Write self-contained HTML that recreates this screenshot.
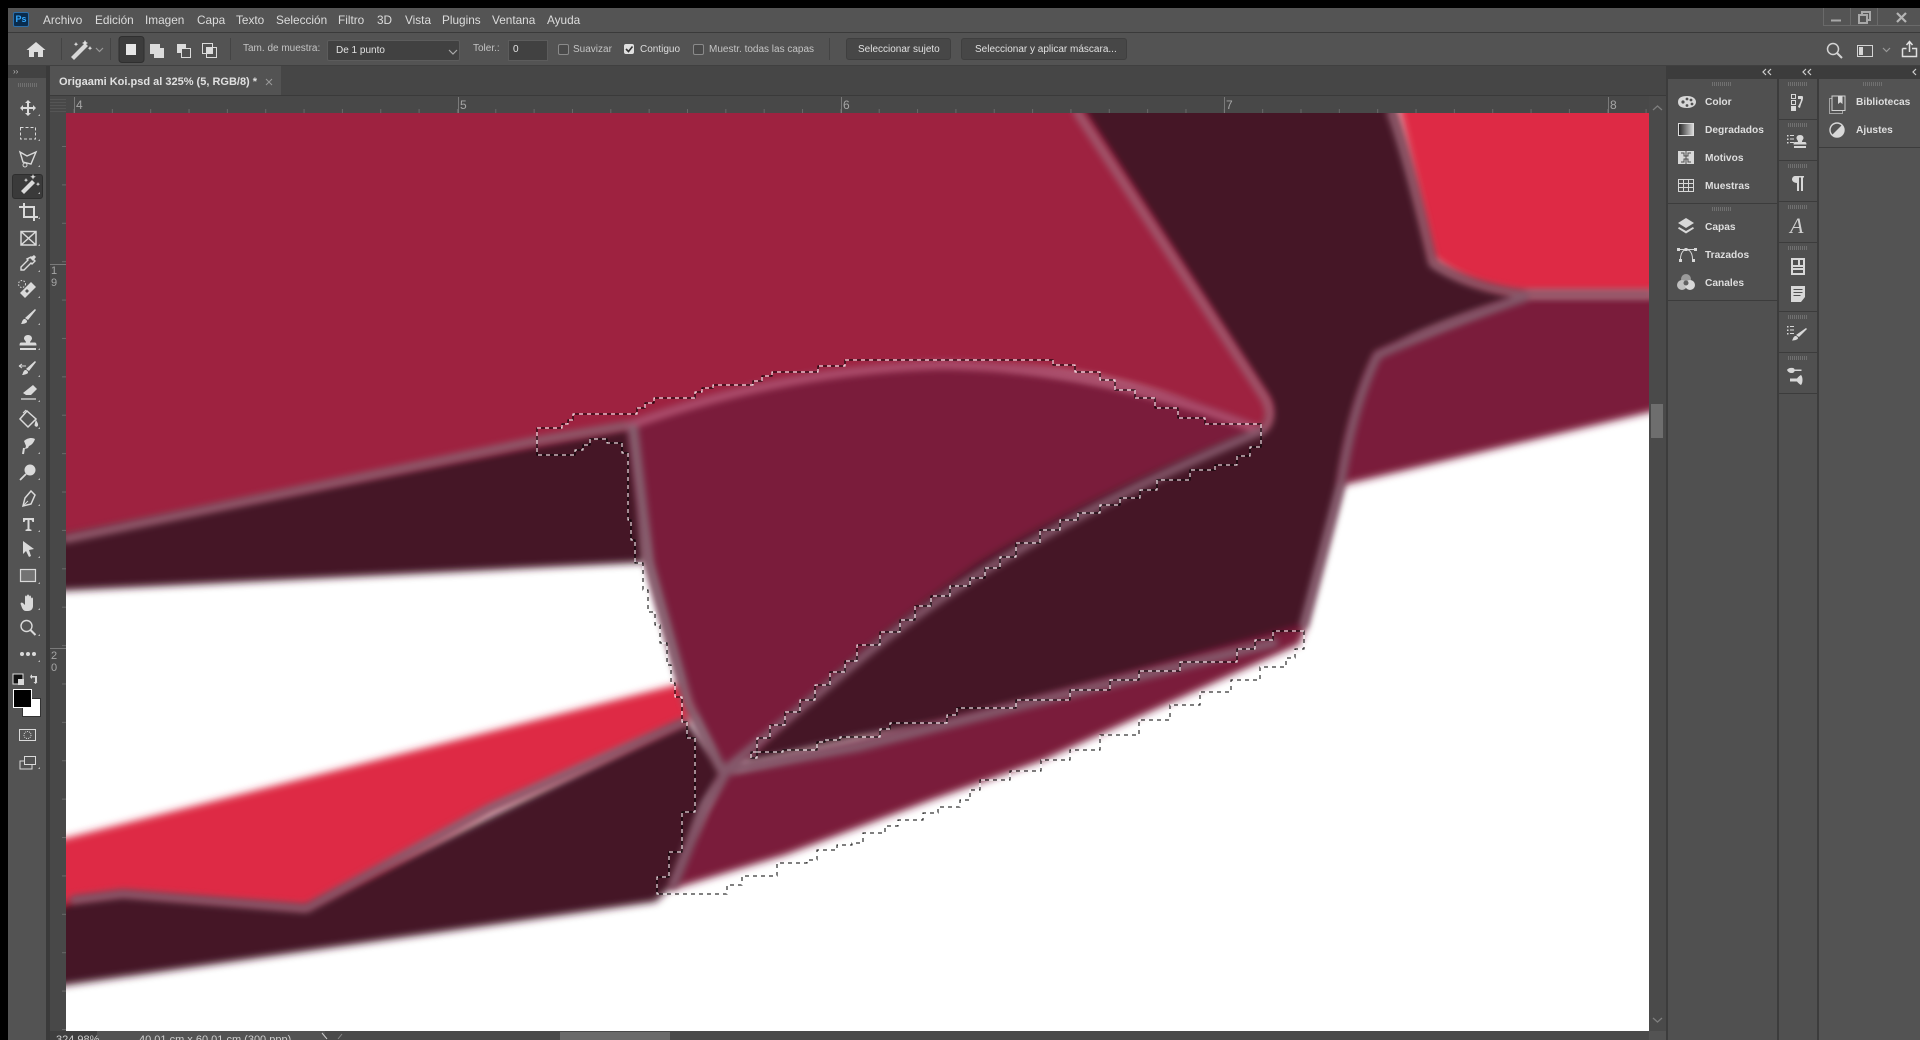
<!DOCTYPE html>
<html lang="es"><head><meta charset="utf-8"><title>Photoshop</title>
<style>
html,body{margin:0;padding:0;background:#000;width:1920px;height:1040px;overflow:hidden}
body{position:relative;font-family:"Liberation Sans",sans-serif;color:#ddd}
.a,.t{position:absolute}
.t{white-space:nowrap;line-height:14px}
.m{top:13px;font-size:11.800px;color:#dcdcdc}
.o{top:43px;font-size:10px;color:#c4c4c4}
.p{font-size:10.200px;font-weight:bold;color:#dedede}
.grip{position:absolute;height:4px;width:20px;background:repeating-linear-gradient(90deg,#707070 0 1px,transparent 1px 2px)}
svg{position:absolute;overflow:visible}
</style></head><body>

<!-- chrome backgrounds -->
<div class="a" style="left:8px;top:8px;width:1912px;height:24px;background:#545454"></div>
<div class="a" style="left:8px;top:32px;width:1912px;height:1px;background:#3a3a3a"></div>
<div class="a" style="left:8px;top:33px;width:1912px;height:33px;background:#535353;border-bottom:1px solid #404040;box-sizing:border-box"></div>
<div class="a" style="left:8px;top:66px;width:1912px;height:974px;background:#3e3e3e"></div>
<div class="a" style="left:50px;top:66px;width:1616px;height:30px;background:#464646;border-bottom:1px solid #3a3a3a;box-sizing:border-box"></div>
<div class="a" style="left:50px;top:66px;width:231px;height:29px;background:#535353"></div>
<div class="a" style="left:8px;top:66px;width:38px;height:974px;background:#535353"></div>
<div class="a" style="left:8px;top:66px;width:38px;height:12px;background:#424242"></div>
<div class="a" style="left:46px;top:66px;width:4px;height:974px;background:#3a3a3a"></div>

<!-- logo + menu -->
<div class="a" style="left:13px;top:12px;width:16px;height:15px;background:#0a2c4d;border:1px solid #2d6ea8;box-sizing:border-box;border-radius:2px;color:#31a8ff;font:bold 9px/13px 'Liberation Sans';text-align:center">Ps</div>
<span class="t m" style="left:43px">Archivo</span>
<span class="t m" style="left:95px">Edición</span>
<span class="t m" style="left:145px">Imagen</span>
<span class="t m" style="left:197px">Capa</span>
<span class="t m" style="left:236px">Texto</span>
<span class="t m" style="left:276px">Selección</span>
<span class="t m" style="left:338px">Filtro</span>
<span class="t m" style="left:377px">3D</span>
<span class="t m" style="left:405px">Vista</span>
<span class="t m" style="left:442px">Plugins</span>
<span class="t m" style="left:492px">Ventana</span>
<span class="t m" style="left:547px">Ayuda</span>

<!-- window controls -->
<div class="a" style="left:1823px;top:8px;width:97px;height:18px;border-left:1px solid #6a6a6a;border-bottom:1px solid #6a6a6a;box-sizing:border-box"></div>
<div class="a" style="left:1850px;top:8px;width:1px;height:18px;background:#6a6a6a"></div>
<div class="a" style="left:1877px;top:8px;width:1px;height:18px;background:#6a6a6a"></div>
<svg style="left:0;top:0" width="1920" height="70" fill="none" stroke="#a8a8a8" stroke-width="2">
<path d="M1831 20.500h10"/>
<path d="M1859 15h8v8h-8zM1862 15v-3h8v8h-3"/>
<path d="M1897 13l9 9M1906 13l-9 9" stroke="#b5b5b5" stroke-width="2.200"/>
</svg>

<!-- options bar -->
<svg style="left:0;top:0" width="1920" height="70">
<path d="M36 42l-9.500 8h2.500v7h5v-5h4v5h5v-7h2.500z" fill="#dedede"/>
<rect x="61" y="38" width="1" height="22" fill="#444"/>
<path d="M71 59l14-14 3 3-14 14z" fill="#d8d8d8" transform="translate(0,-2)"/>
<path d="M85 40l1 2 2 1-2 1-1 2-1-2-2-1 2-1zM90 46l.7 1.500 1.500.7-1.500.7-.7 1.500-.7-1.500-1.500-.7 1.500-.7zM76 42l.7 1.500 1.500.7-1.500.7-.7 1.500-.7-1.500-1.500-.7 1.500-.7z" fill="#e0e0e0"/>
<path d="M96 48l3.500 3.500 3.500-3.500" fill="none" stroke="#9a9a9a" stroke-width="1.200"/>
<rect x="110" y="38" width="1" height="22" fill="#444"/>
<rect x="119" y="36.500" width="25" height="26" rx="3" fill="#3c3c3c" stroke="#2f2f2f"/>
<rect x="126" y="44" width="10" height="11" fill="#e6e6e6"/>
<rect x="150" y="44" width="10" height="10" fill="#dcdcdc"/><rect x="154" y="48" width="10" height="10" fill="#dcdcdc"/>
<rect x="177" y="44" width="9" height="9" fill="#dcdcdc"/><rect x="181.500" y="48.500" width="9" height="9" fill="#535353" stroke="#dcdcdc"/>
<rect x="202.500" y="43.500" width="10" height="10" fill="none" stroke="#dcdcdc"/><rect x="206.500" y="47.500" width="10" height="10" fill="none" stroke="#dcdcdc"/><rect x="206.500" y="47.500" width="6" height="6" fill="#dcdcdc"/>
<rect x="230" y="38" width="1" height="22" fill="#444"/>
<rect x="829" y="38" width="1" height="22" fill="#444"/>
</svg>
<span class="t o" style="left:243px;top:42px">Tam. de muestra:</span>
<div class="a" style="left:327px;top:40px;width:133px;height:21px;background:#414141;border:1px solid #5c5c5c;box-sizing:border-box;border-radius:2px"></div>
<span class="t o" style="left:336px;top:44px;color:#e2e2e2">De 1 punto</span>
<svg style="left:448px;top:48px" width="10" height="8"><path d="M1 2l4 4 4-4" fill="none" stroke="#aaa" stroke-width="1.200"/></svg>
<span class="t o" style="left:473px;top:42px">Toler.:</span>
<div class="a" style="left:508px;top:40px;width:40px;height:21px;background:#414141;border:1px solid #5c5c5c;box-sizing:border-box"></div>
<span class="t o" style="left:513px;top:43px;color:#e2e2e2">0</span>
<div class="a" style="left:558px;top:44px;width:9px;height:9px;border:1px solid #8a8a8a;border-radius:2px;background:#4a4a4a"></div>
<span class="t o" style="left:573px">Suavizar</span>
<div class="a" style="left:624px;top:44px;width:10px;height:10px;background:#e0e0e0;border-radius:2px"></div>
<svg style="left:624px;top:44px" width="10" height="10"><path d="M2 5l2.500 2.500 4-5" fill="none" stroke="#333" stroke-width="1.600"/></svg>
<span class="t o" style="left:640px;color:#dcdcdc">Contiguo</span>
<div class="a" style="left:693px;top:44px;width:9px;height:9px;border:1px solid #8a8a8a;border-radius:2px;background:#4a4a4a"></div>
<span class="t o" style="left:709px">Muestr. todas las capas</span>
<div class="a" style="left:846px;top:38px;width:105px;height:22px;background:#474747;border:1px solid #3f3f3f;box-sizing:border-box;border-radius:3px"></div>
<span class="t o" style="left:858px;color:#e0e0e0">Seleccionar sujeto</span>
<div class="a" style="left:961px;top:38px;width:166px;height:22px;background:#474747;border:1px solid #3f3f3f;box-sizing:border-box;border-radius:3px"></div>
<span class="t o" style="left:975px;color:#e0e0e0">Seleccionar y aplicar máscara...</span>

<svg style="left:0;top:0" width="1920" height="70" fill="none" stroke="#d4d4d4">
<circle cx="1833" cy="49" r="5.500" stroke-width="1.500"/><path d="M1837 53l5 5" stroke-width="2"/>
<rect x="1857.500" y="45.500" width="15" height="11"/><rect x="1859" y="47" width="4" height="8" fill="#d4d4d4" stroke="none"/>
<path d="M1883 48l3.500 3.500 3.500-3.500" stroke="#999" stroke-width="1.200"/>
<path d="M1902.500 48.500h4M1912 48.500h4.500v8h-14v-8M1909.500 52v-10M1906.500 45l3-3.500 3 3.500" stroke="#e0e0e0" stroke-width="1.500"/>
</svg>

<!-- tab -->
<span class="t" style="left:59px;top:75px;font-size:11px;font-weight:bold;color:#e0e0e0">Origaami Koi.psd al 325% (5, RGB/8) *</span>
<svg style="left:264px;top:77px" width="10" height="10"><path d="M2 2l6 6M8 2l-6 6" stroke="#9a9a9a"/></svg>
<span class="t" style="left:13px;top:66px;font-size:8px;color:#bbb;line-height:12px">››</span>
<div class="grip" style="left:18px;top:83px"></div>

<!-- rulers -->
<div class="a" style="left:50px;top:96px;width:1616px;height:17px;background:#484848"></div>
<div class="a" style="left:50px;top:96px;width:16px;height:944px;background:#484848"></div>
<div class="a" style="left:50px;top:97px;width:16px;height:15px;background:repeating-linear-gradient(0deg,#555 0 1px,transparent 1px 3px)"></div>
<div class="a" style="left:66px;top:109px;width:1583px;height:4px;background-image:linear-gradient(90deg,#696969 1px,transparent 1px);background-size:38.350px 100%;background-position:7.500px 0"></div>
<div class="a" style="left:62px;top:113px;width:4px;height:920px;background-image:linear-gradient(180deg,#696969 1px,transparent 1px);background-size:100% 38.400px;background-position:0 33px"></div>
<div class="a" style="left:74px;top:97px;width:1px;height:16px;background:#7a7a7a"></div>
<div class="a" style="left:458px;top:97px;width:1px;height:16px;background:#7a7a7a"></div>
<div class="a" style="left:841px;top:97px;width:1px;height:16px;background:#7a7a7a"></div>
<div class="a" style="left:1224px;top:97px;width:1px;height:16px;background:#7a7a7a"></div>
<div class="a" style="left:1608px;top:97px;width:1px;height:16px;background:#7a7a7a"></div>
<span class="t" style="left:76px;top:98px;font-size:12px;color:#a6a6a6">4</span>
<span class="t" style="left:460px;top:98px;font-size:12px;color:#a6a6a6">5</span>
<span class="t" style="left:843px;top:98px;font-size:12px;color:#a6a6a6">6</span>
<span class="t" style="left:1226px;top:98px;font-size:12px;color:#a6a6a6">7</span>
<span class="t" style="left:1610px;top:98px;font-size:12px;color:#a6a6a6">8</span>
<div class="a" style="left:50px;top:264px;width:16px;height:1px;background:#7a7a7a"></div>
<div class="a" style="left:50px;top:648px;width:16px;height:1px;background:#7a7a7a"></div>
<span class="t" style="left:51px;top:265px;font-size:11px;color:#a6a6a6;line-height:12px">1<br>9</span>
<span class="t" style="left:51px;top:650px;font-size:11px;color:#a6a6a6;line-height:12px">2<br>0</span>

<!-- canvas -->
<svg style="left:66px;top:113px;overflow:hidden" width="1583" height="918" viewBox="66 113 1583 918">
<defs>
<filter id="b" x="-5%" y="-5%" width="110%" height="110%"><feGaussianBlur stdDeviation="3.200"/></filter>
<filter id="c" x="-5%" y="-5%" width="110%" height="110%"><feGaussianBlur stdDeviation="2.800"/></filter>
</defs>
<rect x="66" y="113" width="1583" height="918" fill="#fff"/>
<g transform="scale(1.2245)" filter="url(#b)" stroke-width="3" stroke-linejoin="round">
<path fill="#9e2040" stroke="#9e2040" d="M30,80H880L1035,325Q1042,345 1030,352Q900,290 770,298Q640,300 515,347L438,362L30,445Z"/>
<path fill="#451226" stroke="#451226" d="M30,443L515,350L525,458L30,482Z"/>
<path fill="#7a1a3a" stroke="#7a1a3a" d="M515,347Q640,302 770,298Q900,300 1030,352Q820,440 700,540Q640,590 592,632L560,570L530,460Z"/>
<path fill="#451226" stroke="#451226" d="M880,80H1135Q1150,130 1170,215Q1200,235 1245,240Q1150,270 1125,290Q1105,330 1095,395L1065,510L830,577L700,601L610,622Q700,530 800,460Q900,400 1030,352Q1045,335 1035,322Z"/>
<path fill="#de2b44" stroke="#de2b44" d="M1142,80H1360V238H1245Q1200,232 1172,210Z"/>
<path fill="#7a1a3a" stroke="#7a1a3a" d="M1245,243H1360V332L1095,395Q1105,330 1125,290Q1180,265 1245,243Z"/>
<path fill="#7a1a3a" stroke="#7a1a3a" d="M592,632L830,577L1065,512L1060,525L1000,552L850,620L760,652L640,697L548,725Z"/>
<path fill="#de2b44" stroke="#de2b44" d="M30,692L555,560L565,585L400,660L250,742L100,730L62,735L30,750Z"/>
<path fill="#451226" stroke="#451226" d="M30,752L62,735L100,730L250,742L560,590L590,630L575,655L550,720L535,735L54,803L30,808Z"/>
</g>
<g transform="scale(1.2245)" fill="none" stroke-linejoin="round" stroke-linecap="round" filter="url(#c)">
<path d="M880,92L1033,325Q1042,342 1030,352" stroke="#a0566c" stroke-width="7"/>
<path d="M54,440L438,360L515,347" stroke="#8f5a6c" stroke-width="7"/>
<path d="M515,347Q640,302 770,298Q900,300 1030,352" stroke="#ad4f6e" stroke-width="7"/>
<path d="M517,350L530,460L562,575L590,630" stroke="#86616f" stroke-width="8"/>
<path d="M590,630Q640,590 700,540Q820,440 1030,352" stroke="#835769" stroke-width="7"/>
<path d="M590,630L700,610L830,577L1040,525" stroke="#84596b" stroke-width="8"/>
<path d="M592,632L575,660L550,722" stroke="#84596b" stroke-width="8"/>
<path d="M1136,92Q1150,130 1170,215Q1200,235 1245,240L1347,240" stroke="#8c5768" stroke-width="7"/>
<path d="M1245,243Q1180,265 1125,290Q1105,330 1095,395L1065,510" stroke="#84596b" stroke-width="7"/>
<path d="M60,735L100,730L250,742L400,660L558,590" stroke="#86596b" stroke-width="7"/>
</g>
<g fill="none" shape-rendering="crispEdges" stroke-width="1">
<path id="ants" stroke="#000" d="M537 428H562V424H568V420H573V414H637V408H645V403H654V398H695V392H702V388H713V385H753V381H762V376H772V372H818V366H845V360H1053V365H1075V372H1100V380H1115V390H1135V398H1155V408H1178V418H1205V424H1261V447H1250V456H1237V465H1215V470H1190V480H1157V490H1140V498H1120V505H1100V513H1078V520H1060V530H1040V543H1016V557H1000V568H985V578H970V586H950V596H931V606H915V620H900V632H880V645H857V661H845V672H830V685H815V700H800V712H785V725H770V738H757V752H751V758H757V752H783V750H817V742H825V740H840V737H880V729H890V723H947V715H957V708H1016V700H1070V690H1110V680H1139V671H1180V662H1237V649H1255V640H1273V631H1304V649H1295V658H1286V667H1260V680H1231V692H1200V705H1170V720H1139V735H1100V750H1070V760H1041V771H1010V780H980V790H970V800H960V807H938V813H923V820H898V826H885V833H863V843H852V845H837V850H817V860H807V863H777V876H742V885H727V894H657V877H669V852H682V812H695V738H687V722H682V697H675V683H671V665H667V643H660V625H655V612H648V590H643V563H635V540H631V520H628V453H622V443H607V439H590V445H583V450H575V455H537Z"/>
<path stroke="#fff" stroke-dasharray="4 4" d="M537 428H562V424H568V420H573V414H637V408H645V403H654V398H695V392H702V388H713V385H753V381H762V376H772V372H818V366H845V360H1053V365H1075V372H1100V380H1115V390H1135V398H1155V408H1178V418H1205V424H1261V447H1250V456H1237V465H1215V470H1190V480H1157V490H1140V498H1120V505H1100V513H1078V520H1060V530H1040V543H1016V557H1000V568H985V578H970V586H950V596H931V606H915V620H900V632H880V645H857V661H845V672H830V685H815V700H800V712H785V725H770V738H757V752H751V758H757V752H783V750H817V742H825V740H840V737H880V729H890V723H947V715H957V708H1016V700H1070V690H1110V680H1139V671H1180V662H1237V649H1255V640H1273V631H1304V649H1295V658H1286V667H1260V680H1231V692H1200V705H1170V720H1139V735H1100V750H1070V760H1041V771H1010V780H980V790H970V800H960V807H938V813H923V820H898V826H885V833H863V843H852V845H837V850H817V860H807V863H777V876H742V885H727V894H657V877H669V852H682V812H695V738H687V722H682V697H675V683H671V665H667V643H660V625H655V612H648V590H643V563H635V540H631V520H628V453H622V443H607V439H590V445H583V450H575V455H537Z"/>
</g>
</svg>

<!-- vertical scrollbar -->
<div class="a" style="left:1649px;top:96px;width:17px;height:944px;background:#4a4a4a"></div>
<div class="a" style="left:1651px;top:404px;width:12px;height:34px;background:#6e6e6e"></div>
<svg style="left:1649px;top:100px" width="17" height="14"><path d="M4 10l4.500-4 4.500 4" fill="none" stroke="#7e7e7e" stroke-width="1.300"/></svg>
<svg style="left:1649px;top:1014px" width="17" height="14"><path d="M4 4l4.500 4 4.500-4" fill="none" stroke="#7e7e7e" stroke-width="1.300"/></svg>

<!-- status bar -->
<div class="a" style="left:50px;top:1031px;width:1616px;height:9px;background:#535353"></div>
<div class="a" style="left:50px;top:1031px;width:47px;height:9px;background:#3f3f3f"></div>
<div class="a" style="left:325px;top:1031px;width:1324px;height:9px;background:#4a4a4a"></div>
<div class="a" style="left:560px;top:1032px;width:110px;height:8px;background:#6a6a6a"></div>
<span class="t" style="left:56px;top:1033px;font-size:11px;color:#d0d0d0;line-height:14px;height:7px;overflow:hidden">324,98%</span>
<span class="t" style="left:139px;top:1033px;font-size:11px;color:#d0d0d0;line-height:14px;height:7px;overflow:hidden">40,01 cm x 60,01 cm (300 ppp)</span>
<svg style="left:320px;top:1033px" width="24" height="7"><path d="M2 0l5 6" stroke="#ccc" fill="none"/><path d="M22 1l-4 5" stroke="#888" fill="none"/></svg>

<!-- left toolbar -->
<div class="a" style="left:12px;top:174px;width:31px;height:25px;background:#3a3a3a;border:1px solid #2e2e2e;box-sizing:border-box;border-radius:3px"></div>
<svg style="left:0;top:0" width="50" height="780" fill="#dadada" stroke="none">
<!-- move -->
<path d="M28 100l3 3h-2v4h4v-2l3 3-3 3v-2h-4v4h2l-3 3-3-3h2v-4h-4v2l-3-3 3-3v2h4v-4h-2z"/>
<!-- marquee -->
<rect x="20.500" y="127.500" width="15" height="11.500" fill="none" stroke="#dadada" stroke-dasharray="3 2"/>
<!-- lasso -->
<path d="M20 152l7 4 9-4-5 12-8-2z" fill="none" stroke="#dadada" stroke-width="1.400"/><circle cx="25" cy="165" r="2" fill="none" stroke="#dadada"/>
<!-- wand -->
<path d="M21 192l11-11 3 3-11 11z" transform="translate(0,-1)"/><path d="M33 174l.8 2 2 .8-2 .8-.8 2-.8-2-2-.8 2-.8zM38 182l.6 1.500 1.500.6-1.500.6-.6 1.500-.6-1.500-1.500-.6 1.500-.6zM26 178l.6 1.500 1.500.6-1.500.6-.6 1.500-.6-1.500-1.500-.6 1.500-.6z"/>
<!-- crop -->
<path d="M19 206h4v-3h2v3h10v10h3v2h-3v3h-2v-3H23v-10h-4zM25 208v8h8v-8z"/>
<!-- frame -->
<path d="M21 231.500h15v13.500h-15zM21 231.500l15 13.500M36 231.500l-15 13.500" fill="none" stroke="#dadada" stroke-width="1.500"/>
<!-- eyedropper -->
<path d="M31 257l4 4-3 3-1-1-7 7h-3v-3l7-7-1-1z" fill="none" stroke="#dadada" stroke-width="1.400"/><path d="M30 258l4-3 2 2-3 4z"/>
<!-- heal -->
<path d="M20 293l11-11 5 5-11 11z"/><path d="M27 289l2 2-2 2-2-2z" fill="#535353"/><circle cx="22" cy="284" r="3.500" fill="none" stroke="#dadada" stroke-dasharray="1.500 1.500"/>
<!-- brush -->
<path d="M35 309l1 1-8 10-3-2z"/><path d="M24 319c2 0 3 1 3 3-1 1.500-4 2-6 2 1-1 1-4 3-5z"/>
<!-- stamp -->
<path d="M28 335c3 0 4 2 4 3.500s-2 2.500-2 4h5c1 0 1.500 1 1.500 3h-17c0-2 .5-3 1.500-3h5c0-1.500-2-2.500-2-4s1-3.500 4-3.500zM20 348h16v2H20z"/>
<!-- history brush -->
<path d="M35 361l1 1-7 9-3-2z"/><path d="M25 370c2 0 3 1 3 3-1 1-4 2-6 2 1-1 1-4 3-5z"/><path d="M19 366h7M19 366l3-2M19 366l3 2" stroke="#dadada" fill="none"/>
<!-- eraser -->
<path d="M28 389l5-4 4 4-6 6h-5l-3-2z"/><path d="M21 399h15" stroke="#dadada" stroke-width="1.300"/>
<!-- bucket -->
<path d="M27 411l9 8-8 8-8-8z" fill="none" stroke="#dadada" stroke-width="1.500"/><path d="M26 410l-3 3M36 421c1 2 2 3 1.500 4.500s-2.500.5-2.500-.5z" stroke="#dadada" fill="#dadada"/>
<!-- smudge -->
<path d="M24 441c3-3 8-4 11-2-1 3-3 6-6 7l-1 2-3 1 1-3z"/><path d="M24 448l-1 6" stroke="#dadada" stroke-width="2"/>
<!-- dodge -->
<circle cx="30" cy="470" r="5.500"/><path d="M26 474l-6 6" stroke="#dadada" stroke-width="1.800"/>
<!-- pen -->
<path d="M31 491l4 4-4 9-8 2 2-8z" fill="none" stroke="#dadada" stroke-width="1.500"/><path d="M23 506l5-5"  stroke="#dadada"/>
<!-- type -->
<path d="M23 518h11v4h-1.500l-1-2h-2v9l2 .8V531h-6v-1.200l2-.8v-9h-2l-1 2H23z"/>
<!-- path select -->
<path d="M23 541l11 8-5 1 2 6-2 1-3-6-3 3z"/>
<!-- rect -->
<rect x="20.500" y="569.500" width="15" height="12" fill="#737373" stroke="#dadada" stroke-width="1.200"/>
<!-- hand -->
<path d="M21 605c-1-2 0-3 2-2l2 2v-8c0-2 2-2 2 0v-1c0-2 2-2 2 0v1c0-2 2-2 2 0v2c0-2 2-2 2 0v7c0 3-2 5-5 5h-2c-3 0-4-3-5-6z"/>
<!-- zoom -->
<circle cx="26.500" cy="626" r="5.500" fill="none" stroke="#dadada" stroke-width="1.400"/><path d="M30.500 630l5 5" stroke="#dadada" stroke-width="2"/>
<!-- dots -->
<circle cx="22" cy="654" r="2"/><circle cx="28" cy="654" r="2"/><circle cx="34" cy="654" r="2"/>
<!-- swap -->
<path d="M31 675l-1 2 2 2v-1.500h3V682h-1.500l2 2 2-2H37v-6h-5v-1.500z"/>
<!-- mini colours -->
<rect x="13" y="674" width="10" height="10" fill="#111" stroke="#ddd"/><rect x="18" y="679" width="6" height="6"/>
<!-- quickmask -->
<rect x="19.500" y="729.500" width="16" height="11" fill="none" stroke="#dadada"/><circle cx="27.500" cy="735" r="3.500" fill="none" stroke="#dadada" stroke-dasharray="1 1"/>
<!-- screen mode -->
<rect x="20" y="761" width="12" height="8" fill="#535353" stroke="#dadada"/><rect x="24.500" y="756.500" width="11" height="8" fill="#535353" stroke="#dadada"/>
<!-- corner arrows -->
<g fill="#b5b5b5"><path d="M40 114v2h-2zM40 139v2h-2zM40 165v2h-2zM40 192v2h-2zM40 217v2h-2zM40 244v2h-2zM40 270v2h-2zM40 296v2h-2zM40 323v2h-2zM40 348v2h-2zM40 375v2h-2zM40 400v2h-2zM40 427v2h-2zM40 452v2h-2zM40 478v2h-2zM40 504v2h-2zM40 530v2h-2zM40 556v2h-2zM40 582v2h-2zM40 608v2h-2zM40 634v2h-2zM40 660v2h-2zM40 767v2h-2z"/></g>
</svg>
<div class="a" style="left:22px;top:698px;width:19px;height:19px;background:#fff;border:1px solid #333;box-sizing:border-box"></div>
<div class="a" style="left:13px;top:689px;width:19px;height:19px;background:#000;border:1px solid #fff;box-sizing:border-box"></div>

<!-- right panels -->
<div class="a" style="left:1666px;top:66px;width:254px;height:974px;background:#3c3c3c"></div>
<div class="a" style="left:1668px;top:79px;width:109px;height:961px;background:#505050"></div>
<div class="a" style="left:1668px;top:203px;width:109px;height:1px;background:#3c3c3c"></div>
<div class="a" style="left:1668px;top:300px;width:109px;height:1px;background:#3c3c3c"></div>
<div class="a" style="left:1779px;top:79px;width:38px;height:961px;background:#505050"></div>
<div class="a" style="left:1779px;top:119px;width:38px;height:1px;background:#3c3c3c"></div>
<div class="a" style="left:1779px;top:160px;width:38px;height:1px;background:#3c3c3c"></div>
<div class="a" style="left:1779px;top:201px;width:38px;height:1px;background:#3c3c3c"></div>
<div class="a" style="left:1779px;top:242px;width:38px;height:1px;background:#3c3c3c"></div>
<div class="a" style="left:1779px;top:311px;width:38px;height:1px;background:#3c3c3c"></div>
<div class="a" style="left:1779px;top:352px;width:38px;height:1px;background:#3c3c3c"></div>
<div class="a" style="left:1779px;top:393px;width:38px;height:1px;background:#3c3c3c"></div>
<div class="a" style="left:1819px;top:79px;width:101px;height:961px;background:#535353"></div>
<div class="a" style="left:1819px;top:147px;width:101px;height:1px;background:#3c3c3c"></div>
<div class="grip" style="left:1712px;top:82px"></div>
<div class="grip" style="left:1712px;top:207px"></div>
<div class="grip" style="left:1788px;top:82px"></div>
<div class="grip" style="left:1788px;top:123px"></div>
<div class="grip" style="left:1788px;top:164px"></div>
<div class="grip" style="left:1788px;top:205px"></div>
<div class="grip" style="left:1788px;top:246px"></div>
<div class="grip" style="left:1788px;top:315px"></div>
<div class="grip" style="left:1788px;top:356px"></div>
<div class="grip" style="left:1863px;top:82px"></div>

<span class="t p" style="left:1705px;top:96px">Color</span>
<span class="t p" style="left:1705px;top:124px">Degradados</span>
<span class="t p" style="left:1705px;top:152px">Motivos</span>
<span class="t p" style="left:1705px;top:180px">Muestras</span>
<span class="t p" style="left:1705px;top:221px">Capas</span>
<span class="t p" style="left:1705px;top:249px">Trazados</span>
<span class="t p" style="left:1705px;top:277px">Canales</span>
<span class="t p" style="left:1856px;top:96px">Bibliotecas</span>
<span class="t p" style="left:1856px;top:124px">Ajustes</span>

<svg style="left:0;top:0" width="1920" height="400" fill="#d8d8d8">
<defs><linearGradient id="g"><stop offset="0" stop-color="#222"/><stop offset="1" stop-color="#ddd"/></linearGradient></defs>
<!-- collapse arrows -->
<g fill="none" stroke="#cfcfcf" stroke-width="1.200"><path d="M1766 69l-3 3 3 3M1771 69l-3 3 3 3M1806 69l-3 3 3 3M1811 69l-3 3 3 3M1916 69l-3 3 3 3"/></g>
<!-- color palette -->
<path d="M1687 96c6 0 9 3 9 6s-3 6-9 6-9-2-9-6 3-6 9-6z"/><circle cx="1683" cy="102" r="1.600" fill="#505050"/><circle cx="1687" cy="99" r="1.400" fill="#505050"/><circle cx="1691" cy="100" r="1.400" fill="#505050"/><circle cx="1692" cy="104" r="1.400" fill="#505050"/><circle cx="1687" cy="105.500" r="1.400" fill="#505050"/>
<!-- gradient -->
<rect x="1678.500" y="123.500" width="15" height="12" fill="url(#g)" stroke="#ddd"/>
<!-- patterns -->
<rect x="1678" y="151" width="16" height="13"/><path d="M1681 153h3v3h4v-3h3M1681 162h3v-3h4v3h3M1686 151v13" stroke="#505050" fill="none"/>
<!-- swatches -->
<path d="M1678.500 179.500h15v12h-15zM1678.500 183.500h15M1678.500 187.500h15M1683.500 179.500v12M1688.500 179.500v12" fill="none" stroke="#d8d8d8"/>
<!-- layers -->
<path d="M1686 218l8 5-8 5-8-5z"/><path d="M1679 227l7 4 7-4 1 1.500-8 5-8-5z"/>
<!-- paths -->
<path d="M1677 248h3v3h-3zM1694 248h3v3h-3zM1684.500 248h3v3h-3zM1679 259h3v3h-3zM1692 259h3v3h-3z"/><path d="M1680 249.500h14M1680.500 259c0-6 3-9.500 6-9.500s6 3.500 6 9.500" fill="none" stroke="#d8d8d8"/>
<!-- channels -->
<circle cx="1686" cy="279" r="5" fill="#9a9a9a"/><circle cx="1682" cy="285" r="5" fill="#c0c0c0"/><circle cx="1690" cy="285" r="5" fill="#d8d8d8"/><circle cx="1686" cy="283" r="2.500" fill="#606060"/>
<!-- col2 -->
<path d="M1791.500 94.500h4v4h-4zM1791.500 100.500h4v4h-4z" fill="none" stroke="#d8d8d8"/><rect x="1791" y="106" width="5" height="5"/><path d="M1798 96h4c1 0 1 1 1 2 0 3-2 5-3 10l-2-1c1-3 3-5 3-8h-3z"/>
<!-- stamp list -->
<path d="M1787 135h1.500v1.500H1787zM1787 138.500h1.500v1.500H1787zM1787 142h1.500v1.500H1787zM1790 135h4v1h-4zM1790 138.500h4v1h-4zM1790 142h4v1h-4z"/><path d="M1800 135c2.500 0 3.500 1.500 3.500 3s-1.500 2-1.500 4h3c1 0 1.500 1 1.500 2.500h-13c0-1.500.5-2.500 1.500-2.500h3c0-2-1.500-2.500-1.500-4s1-3 3.500-3zM1794 146h12v2h-12z"/>
<!-- paragraph -->
<path d="M1795 176h9v1.500h-1V191h-2v-13.500h-2V191h-2v-8c-3 0-5-2-5-3.500s1-3.500 3-3.500z"/>
<!-- character A -->
<text x="1790" y="233" font-family="Liberation Serif" font-style="italic" font-size="22" fill="#cfcfcf">A</text>
<!-- frame doc -->
<path d="M1791 258h14v17h-14zM1793 260v5h5v-5zM1800 260v5h3v-5zM1793 267v1h10v-1zM1793 270v3h10v-3z" fill-rule="evenodd"/>
<!-- note -->
<path d="M1791 286h14v11l-4 5h-10zM1793.500 289v1h9v-1zM1793.500 292v1h9v-1zM1793.500 295v1h7v-1z" fill-rule="evenodd"/>
<!-- brush list -->
<path d="M1787 326h1.500v1.500H1787zM1787 329.500h1.500v1.500H1787zM1787 333h1.500v1.500H1787zM1790 326h4v1h-4zM1790 329.500h4v1h-4zM1790 333h4v1h-4z"/><path d="M1806 328l1 1-8 8-3-2z"/><path d="M1795 336c2 0 3 1 3 2.500-1 1.500-4 2-6 2 1-1 1-3.500 3-4.500z"/>
<!-- adjustments -->
<path d="M1787 370c1-2 4-2.500 6-2 1 .4 1.500.8 1.500 1.500h7v1.500h-7c0 1-1 2-3 2s-3.500-1-4.500-3zM1790 378.500h7c1-1.500 3-3 4-3.500 1 1 1.500 3 1.500 5 0 2-.5 4-1.500 5-1-.5-3-2-4-3.500h-7z"/>
<!-- libraries -->
<rect x="1829.500" y="98.500" width="13" height="15" fill="none" stroke="#c8c8c8" opacity=".7"/><rect x="1832" y="96" width="13" height="14.500" fill="#535353" stroke="#d0d0d0"/><path d="M1838 96h4.500v8l-2.250-1.800-2.250 1.800z"/>
<!-- adjustments circle -->
<circle cx="1837" cy="130" r="7" fill="none" stroke="#d8d8d8" stroke-width="1.400"/><path d="M1842 125a7 7 0 0 1-10 10z"/>
</svg>
</body></html>
